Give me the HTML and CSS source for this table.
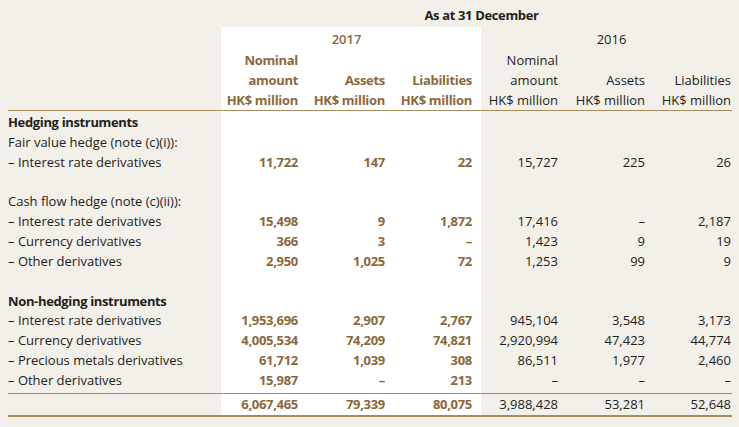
FILE: index.html
```html
<!DOCTYPE html>
<html>
<head>
<meta charset="utf-8">
<link rel="stylesheet" href="styles.css">
</head>
<body>
<div class="page">
<table class="fin">
  <colgroup>
    <col class="lab">
    <col class="c1 hl"><col class="c2 hl"><col class="c3 hl">
    <col class="c4"><col class="c5"><col class="c6">
  </colgroup>
  <thead>
    <tr class="r-as"><th class="bg"></th><th colspan="6" class="as">As at 31 December</th></tr>
    <tr class="r-year"><th></th><th colspan="3" class="y17">2017</th><th colspan="3" class="y16">2016</th></tr>
    <tr class="r-h"><th></th><th class="cur">Nominal</th><th class="cur"></th><th class="cur"></th><th>Nominal</th><th></th><th></th></tr>
    <tr class="r-h"><th></th><th class="cur">amount</th><th class="cur">Assets</th><th class="cur">Liabilities</th><th>amount</th><th>Assets</th><th>Liabilities</th></tr>
    <tr class="r-h r-unit"><th></th><th class="cur">HK$ million</th><th class="cur">HK$ million</th><th class="cur">HK$ million</th><th>HK$ million</th><th>HK$ million</th><th>HK$ million</th></tr>
  </thead>
  <tbody>
    <tr class="first"><td class="lab sec">Hedging instruments</td><td></td><td></td><td></td><td></td><td></td><td></td></tr>
    <tr><td class="lab">Fair value hedge (note (c)(i)):</td><td></td><td></td><td></td><td></td><td></td><td></td></tr>
    <tr><td class="lab">– Interest rate derivatives</td><td class="cur">11,722</td><td class="cur">147</td><td class="cur">22</td><td>15,727</td><td>225</td><td>26</td></tr>
    <tr><td class="lab">&nbsp;</td><td></td><td></td><td></td><td></td><td></td><td></td></tr>
    <tr><td class="lab">Cash flow hedge (note (c)(ii)):</td><td></td><td></td><td></td><td></td><td></td><td></td></tr>
    <tr><td class="lab">– Interest rate derivatives</td><td class="cur">15,498</td><td class="cur">9</td><td class="cur">1,872</td><td>17,416</td><td>–</td><td>2,187</td></tr>
    <tr><td class="lab">– Currency derivatives</td><td class="cur">366</td><td class="cur">3</td><td class="cur">–</td><td>1,423</td><td>9</td><td>19</td></tr>
    <tr><td class="lab">– Other derivatives</td><td class="cur">2,950</td><td class="cur">1,025</td><td class="cur">72</td><td>1,253</td><td>99</td><td>9</td></tr>
    <tr><td class="lab">&nbsp;</td><td></td><td></td><td></td><td></td><td></td><td></td></tr>
    <tr><td class="lab sec">Non-hedging instruments</td><td></td><td></td><td></td><td></td><td></td><td></td></tr>
    <tr><td class="lab">– Interest rate derivatives</td><td class="cur">1,953,696</td><td class="cur">2,907</td><td class="cur">2,767</td><td>945,104</td><td>3,548</td><td>3,173</td></tr>
    <tr><td class="lab">– Currency derivatives</td><td class="cur">4,005,534</td><td class="cur">74,209</td><td class="cur">74,821</td><td>2,920,994</td><td>47,423</td><td>44,774</td></tr>
    <tr><td class="lab">– Precious metals derivatives</td><td class="cur">61,712</td><td class="cur">1,039</td><td class="cur">308</td><td>86,511</td><td>1,977</td><td>2,460</td></tr>
    <tr class="last"><td class="lab">– Other derivatives</td><td class="cur">15,987</td><td class="cur">–</td><td class="cur">213</td><td>–</td><td>–</td><td>–</td></tr>
    <tr class="total"><td class="lab"></td><td class="cur">6,067,465</td><td class="cur">79,339</td><td class="cur">80,075</td><td>3,988,428</td><td>53,281</td><td>52,648</td></tr>
  </tbody>
</table>
</div>
</body>
</html>
```

FILE: styles.css
```css
html, body {
  margin: 0;
  padding: 0;
  background: #f3efe9;
}
body {
  font-family: "Open Sans", "Liberation Sans", sans-serif;
  font-size: 13px;
  color: #231f20;
}
.page {
  padding: 0 7px 0 8px;
}
.fin {
  width: 724px;
  table-layout: fixed;
  border-collapse: collapse;
  border-spacing: 0;
}
col.lab { width: 213px; }
col.c1 { width: 86px; }
col.c2 { width: 87px; }
col.c3 { width: 87px; }
col.c4 { width: 86px; }
col.c5 { width: 87px; }
col.c6 { width: 78px; }
col.hl { background: #ffffff; }

.fin th, .fin td {
  padding: 0 9px 0 0;
  text-align: right;
  font-weight: 450;
  line-height: 20px;
  white-space: nowrap;
}
.fin tr > :last-child { padding-right: 1px; }
.fin td.lab { text-align: left; }
.fin .cur {
  color: #8a683b;
  font-weight: 700;
  letter-spacing: -0.3px;
}
.fin .sec {
  font-weight: 700;
  letter-spacing: -0.35px;
}

.r-as th {
  background: #f3efe9;
  padding-top: 5px;
  padding-bottom: 2px;
}
.r-as th.as {
  text-align: center;
  font-weight: 700;
  letter-spacing: -0.35px;
  padding-left: 10px;
  padding-right: 0;
}
.r-year th {
  padding-top: 2px;
  padding-bottom: 1px;
}
.r-year th.y17 {
  text-align: center;
  color: #8a683b;
  font-weight: 550;
  padding-right: 9px;
}
.r-year th.y16 {
  text-align: center;
  padding-left: 10px;
  padding-right: 0;
}
.r-unit th {
  border-bottom: 1px solid #a88b5e;
}
.fin tbody td { line-height: 19.85px; }
.fin tbody tr.first td { padding-top: 2px; }
.fin tbody tr.last td { padding-bottom: 2px; }
.fin tr.total td {
  border-top: 1px solid #a88b5e;
  border-bottom: 2px solid #a88b5e;
  padding-top: 1px;
  padding-bottom: 1px;
  line-height: 19px;
}
```
